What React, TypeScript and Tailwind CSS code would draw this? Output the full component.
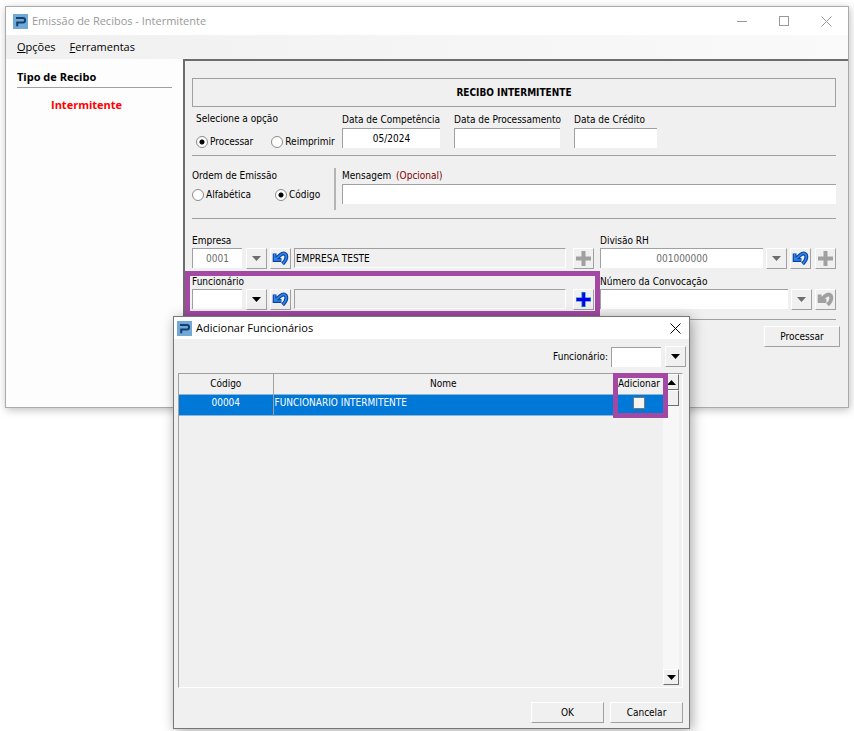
import type { ReactNode } from 'react';

const PANEL_FONT = "font-['DejaVu_Sans_Condensed','DejaVu_Sans',sans-serif]";
const TITLE_FONT = "font-['Open_Sans',sans-serif]";

const FIELD = 'h-5 min-w-0 border-t border-l border-[#a0a0a0] bg-white text-center outline-none';
const READONLY = 'mr-[7px] ml-[3px] h-5 min-w-0 flex-1 border border-t-[#a0a0a0] border-r-white border-b-white border-l-[#a0a0a0] pl-px outline-none';
const BUTTON = 'flex h-[21px] items-center justify-center border border-t-white border-l-white border-r-[#a0a0a0] border-b-[#a0a0a0] bg-[#f0f0f0]';
const SCROLL_BUTTON = 'flex h-4 items-center justify-center border border-t-white border-l-white border-r-[#6d6d6d] border-b-[#6d6d6d] bg-[#f0f0f0]';

function Logo() {
  return (
    <svg width="15" height="15" viewBox="0 0 15 15" className="shrink-0" aria-hidden="true">
      <rect width="15" height="15" fill="#70a8d6" />
      <path d="M3 4H10Q12 4 12 5.7V6.8Q12 8.5 10 8.5H4.2V12.3" fill="none" stroke="#123f70" strokeWidth="2" />
    </svg>
  );
}

function CloseIcon() {
  return (
    <svg width="11" height="11" viewBox="0 0 11 11" fill="none" stroke="currentColor" aria-hidden="true">
      <path d="M.5 .5 10.5 10.5M10.5 .5 .5 10.5" />
    </svg>
  );
}

function Triangle({ up = false }: { up?: boolean }) {
  return (
    <svg width="9" height="5" viewBox="0 0 9 5" fill="currentColor" aria-hidden="true">
      <path d={up ? 'M0 5H9L4.5 0Z' : 'M0 0H9L4.5 5Z'} />
    </svg>
  );
}

function DropButton({ label, disabled = false }: { label: string; disabled?: boolean }) {
  return (
    <button type="button" aria-label={label} className={`${BUTTON} w-[21px] shrink-0 ${disabled ? 'text-[#6d6d6d]' : 'text-black'}`}>
      <Triangle />
    </button>
  );
}

function UndoButton({ label, disabled = false }: { label: string; disabled?: boolean }) {
  const arrow = 'M2.6 2.4V9H9.4M3.4 8.2L8.6 3.8Q11.6 1.2 13.8 3.6Q15.8 7.6 10.6 12.8';
  return (
    <button type="button" aria-label={label} className={`${BUTTON} w-[21px] shrink-0`}>
      <svg width="17" height="15" viewBox="0 0 17 15" fill="none" aria-hidden="true">
        <path d={arrow} stroke={disabled ? '#a0a0a0' : '#0b419f'} strokeWidth="3.8" />
        {!disabled && <path d={arrow} stroke="#2f86ea" strokeWidth="1.6" />}
      </svg>
    </button>
  );
}

function PlusButton({ label, disabled = false }: { label: string; disabled?: boolean }) {
  return (
    <button type="button" aria-label={label} className={`${BUTTON} w-[21px] shrink-0`}>
      <svg width="15" height="15" viewBox="0 0 15 15" aria-hidden="true">
        <path d="M5.5 0H9.5V5.5H15V9.5H9.5V15H5.5V9.5H0V5.5H5.5Z" fill={disabled ? '#a0a0a0' : '#0a6ec0'} />
        {!disabled && <path d="M6.5 1H9V6H14V9H9V14H6.5V9H1V6H6.5Z" fill="#0000ee" />}
      </svg>
    </button>
  );
}

function Radio({ name, label, defaultChecked = false }: { name: string; label: string; defaultChecked?: boolean }) {
  return (
    <label className="flex items-center gap-[2px]">
      <input
        type="radio"
        name={name}
        defaultChecked={defaultChecked}
        className="size-3 appearance-none rounded-full border border-[#8a8a8a] bg-white checked:bg-[radial-gradient(circle,#000_2px,#fff_3px)]"
      />
      {label}
    </label>
  );
}

function DateField({ id, label, width, value }: { id: string; label: string; width: string; value?: string }) {
  return (
    <div className={`flex flex-col ${width}`}>
      <label htmlFor={id} className="whitespace-nowrap">{label}</label>
      <input id={id} defaultValue={value} className={FIELD} />
    </div>
  );
}

function Field({ id, label, children }: { id: string; label: string; children: ReactNode }) {
  return (
    <div>
      <label htmlFor={id} className="block leading-[14px]">{label}</label>
      <div className="flex">{children}</div>
    </div>
  );
}

function ReceiptForm() {
  return (
    <main className="flex-1 border-t-2 border-l-2 border-[#6d6d6d] bg-[#f0f0f0] pt-[17px] pr-3 pb-[60px] pl-[7px]">
      <h1 className="flex h-[29px] items-center justify-center border border-[#a0a0a0] font-bold">RECIBO INTERMITENTE</h1>

      <section className="flex border-b border-[#a0a0a0] pb-[5px]">
        <fieldset className="w-[150px] pt-1 pl-1">
          <legend className="contents">Selecione a opção</legend>
          <div className="flex gap-[18px] pt-[7px]">
            <Radio name="opcao" label="Processar" defaultChecked />
            <Radio name="opcao" label="Reimprimir" />
          </div>
        </fieldset>
        <div className="flex gap-[14px] pt-[5px]">
          <DateField id="competencia" label="Data de Competência" width="w-[98px]" value="05/2024" />
          <DateField id="processamento" label="Data de Processamento" width="w-[106px]" />
          <DateField id="credito" label="Data de Crédito" width="w-[83px]" />
        </div>
      </section>

      <section className="flex border-b border-[#a0a0a0] pt-3 pb-2">
        <fieldset className="w-[144px] border-r-2 border-[#b4b4b4]">
          <legend className="contents">Ordem de Emissão</legend>
          <div className="flex gap-6 pt-[3px]">
            <Radio name="ordem" label="Alfabética" />
            <Radio name="ordem" label="Código" defaultChecked />
          </div>
        </fieldset>
        <div className="flex flex-1 flex-col pb-[6px] pl-[6px]">
          <label htmlFor="mensagem">
            Mensagem <span className="ml-[2px] text-[#800000]">(Opcional)</span>
          </label>
          <input id="mensagem" className={FIELD} />
        </div>
      </section>

      <section className="flex gap-[6px] border-b border-[#a0a0a0] pt-[15px] pb-[9px]">
        <div className="flex flex-1 flex-col gap-[6px]">
          <Field id="empresa" label="Empresa">
            <input id="empresa" defaultValue="0001" className={`${FIELD} mr-1 w-[50px] text-[#6d6d6d]`} />
            <DropButton label="Listar empresas" disabled />
            <div className="w-[3px]" />
            <UndoButton label="Limpar empresa" />
            <input aria-label="Nome da empresa" readOnly defaultValue="EMPRESA TESTE" className={READONLY} />
            <PlusButton label="Adicionar empresa" disabled />
          </Field>
          <div className="relative">
            <Field id="funcionario" label="Funcionário">
              <input id="funcionario" className={`${FIELD} mr-1 w-[50px]`} />
              <DropButton label="Listar funcionários" />
              <div className="w-[3px]" />
              <UndoButton label="Limpar funcionário" />
              <input aria-label="Nome do funcionário" readOnly className={READONLY} />
              <PlusButton label="Adicionar funcionários" />
            </Field>
            <div className="pointer-events-none absolute -top-1 -right-[6px] -bottom-[6px] -left-[7px] border-5 border-[#a349a4]" />
          </div>
        </div>
        <div className="flex w-[236px] flex-col gap-[6px]">
          <Field id="divisao" label="Divisão RH">
            <input id="divisao" defaultValue="001000000" className={`${FIELD} mr-[3px] flex-1 text-[#6d6d6d]`} />
            <DropButton label="Listar divisões" disabled />
            <div className="w-[3px]" />
            <UndoButton label="Limpar divisão" />
            <div className="w-1" />
            <PlusButton label="Adicionar divisão" disabled />
          </Field>
          <Field id="convocacao" label="Número da Convocação">
            <input id="convocacao" className={`${FIELD} mr-[3px] flex-1`} />
            <DropButton label="Listar convocações" disabled />
            <div className="w-[3px]" />
            <UndoButton label="Limpar convocação" disabled />
          </Field>
        </div>
      </section>

      <div className="-mr-1 flex justify-end pt-[6px]">
        <button type="button" className={`${BUTTON} w-[76px]`}>Processar</button>
      </div>
    </main>
  );
}

function AddEmployeesDialog() {
  return (
    <div role="dialog" aria-labelledby="dialog-title" className="absolute top-[316px] left-[173px] w-[517px] border border-[#777] bg-[#f0f0f0] pb-[5px] shadow-[2px_2px_12px_rgba(0,0,0,0.35)]">
      <header className={`flex h-[22px] items-center bg-white pr-2 pl-[3px] text-[11px] ${TITLE_FONT}`}>
        <Logo />
        <h2 id="dialog-title" className="ml-1 flex-1">Adicionar Funcionários</h2>
        <button type="button" aria-label="Fechar"><CloseIcon /></button>
      </header>

      <div className="flex items-center justify-end pt-[7px] pr-[3px]">
        <label htmlFor="busca" className="mr-[3px]">Funcionário:</label>
        <input id="busca" className={`${FIELD} mr-1 w-[50px]`} />
        <DropButton label="Buscar funcionário" />
      </div>

      <div className="mt-[6px] mr-[6px] ml-1 flex h-[315px] border border-t-[#a0a0a0] border-r-white border-b-white border-l-[#a0a0a0] pr-[3px] pb-[2px]">
        <div className="flex-1">
          <table className="w-full table-fixed border-collapse">
            <thead>
              <tr className="h-5">
                <th className="w-[94px] border-r border-[#a0a0a0] font-normal">Código</th>
                <th className="font-normal">Nome</th>
                <th className="w-[50px] pl-[2px] font-normal">Adicionar</th>
              </tr>
            </thead>
            <tbody>
              <tr className="h-5 border-y border-[#8ab4d8] bg-[#0078d7] text-white">
                <td className="border-r border-[#a0a0a0] pb-1 text-center">00004</td>
                <td className="pb-1 pl-px">FUNCIONARIO INTERMITENTE</td>
                <td className="relative pb-1 pl-[2px]">
                  <input type="checkbox" aria-label="Adicionar FUNCIONARIO INTERMITENTE" className="mx-auto block size-3 appearance-none border border-[#777] bg-[#f4f4f0]" />
                  <div className="pointer-events-none absolute -top-[22px] -right-[5px] -bottom-[3px] left-0 border-5 border-[#a349a4]" />
                </td>
              </tr>
            </tbody>
          </table>
        </div>
        <div className="flex w-4 flex-col bg-[#f7f7f7]">
          <button type="button" aria-label="Rolar para cima" className={SCROLL_BUTTON}><Triangle up /></button>
          <div className={SCROLL_BUTTON} />
          <div className="flex-1" />
          <button type="button" aria-label="Rolar para baixo" className={SCROLL_BUTTON}><Triangle /></button>
        </div>
      </div>

      <footer className="flex justify-end gap-[6px] pt-[14px] pr-[6px]">
        <button type="button" className={`${BUTTON} w-[73px]`}>OK</button>
        <button type="button" className={`${BUTTON} w-[73px]`}>Cancelar</button>
      </footer>
    </div>
  );
}

export default function App() {
  return (
    <div className={`relative min-h-screen overflow-hidden bg-white px-[5px] pt-[6px] text-[10px] leading-4 text-black ${PANEL_FONT}`}>
      <div className="border border-[#aaa] bg-[#f0f0f0] shadow-[1px_2px_8px_rgba(0,0,0,0.25)]">
        <header className={`flex h-7 items-center bg-white pr-4 pl-[7px] text-[11px] text-[#999] ${TITLE_FONT}`}>
          <Logo />
          <span className="ml-1 flex-1">Emissão de Recibos - Intermitente</span>
          <div className="flex items-center gap-8">
            <button type="button" aria-label="Minimizar" className="h-px w-[10px] bg-[#999]" />
            <button type="button" aria-label="Maximizar" className="size-[10px] border border-[#999]" />
            <button type="button" aria-label="Fechar"><CloseIcon /></button>
          </div>
        </header>

        <nav className={`flex h-6 items-center gap-[14px] bg-linear-to-r from-[#f0f0f0] to-[#fafafa] px-[11px] text-[11px] ${TITLE_FONT}`}>
          <button type="button"><u>O</u>pções</button>
          <button type="button"><u>F</u>erramentas</button>
        </nav>

        <div className="flex">
          <aside className={`w-[177px] bg-[#fdfdfd] px-[11px] pt-[10px] text-[11px] font-bold ${TITLE_FONT}`}>
            <h2 className="border-b border-[#a0a0a0] pb-[2px]">Tipo de Recibo</h2>
            <a href="#intermitente" className="mt-[9px] ml-[34px] block text-[#ff0000]">Intermitente</a>
          </aside>
          <ReceiptForm />
        </div>
      </div>
      <AddEmployeesDialog />
    </div>
  );
}
